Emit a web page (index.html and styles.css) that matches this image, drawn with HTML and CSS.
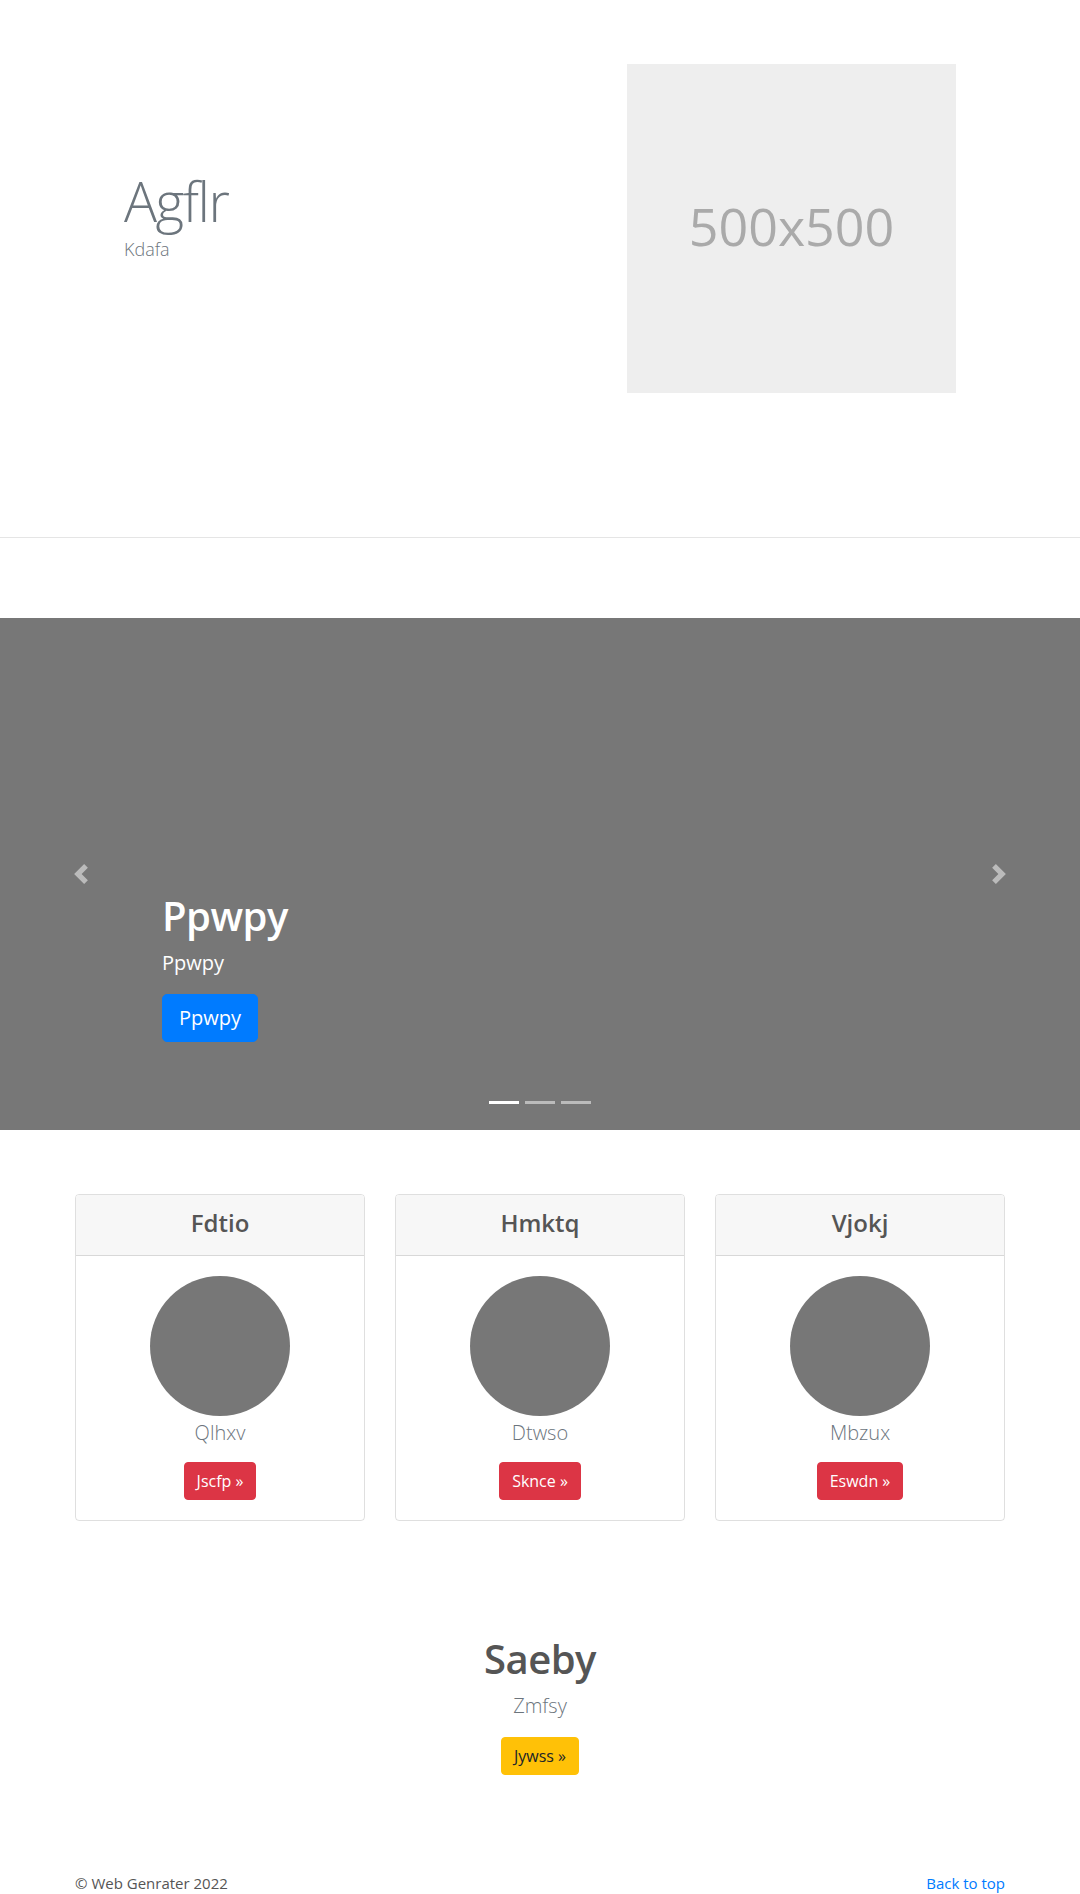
FILE: index.html
```html
<!DOCTYPE html>
<html lang="en">
<head>
<meta charset="utf-8">
<title>Agflr</title>
<link rel="stylesheet" href="styles.css">
</head>
<body>
<section class="hero">
  <div class="container hero-inner">
    <div class="hero-text">
      <h1 class="hero-title">Agflr</h1>
      <p class="hero-sub">Kdafa</p>
    </div>
    <div class="placeholder"><span>500x500</span></div>
  </div>
</section>
<hr class="divider">
<div class="carousel">
  <a class="ctrl prev" href="#"><svg width="20" height="20" viewBox="0 0 8 8"><path fill="#fff" d="M5.25 0l-4 4 4 4 1.5-1.5-2.5-2.5 2.5-2.5-1.5-1.5z"/></svg></a>
  <a class="ctrl next" href="#"><svg width="20" height="20" viewBox="0 0 8 8"><path fill="#fff" d="M2.75 0l-1.5 1.5 2.5 2.5-2.5 2.5 1.5 1.5 4-4-4-4z"/></svg></a>
  <div class="caption">
    <h1 class="caption-title">Ppwpy</h1>
    <p class="caption-text">Ppwpy</p>
    <a class="btn btn-lg btn-primary" href="#">Ppwpy</a>
  </div>
  <ol class="indicators"><li class="active"></li><li></li><li></li></ol>
</div>
<section class="container cards">
  <div class="card">
    <div class="card-header"><h4 class="card-title">Fdtio</h4></div>
    <div class="card-body">
      <div class="circle"></div>
      <p class="lead">Qlhxv</p>
      <a class="btn btn-danger" href="#">Jscfp »</a>
    </div>
  </div>
  <div class="card">
    <div class="card-header"><h4 class="card-title">Hmktq</h4></div>
    <div class="card-body">
      <div class="circle"></div>
      <p class="lead">Dtwso</p>
      <a class="btn btn-danger" href="#">Sknce »</a>
    </div>
  </div>
  <div class="card">
    <div class="card-header"><h4 class="card-title">Vjokj</h4></div>
    <div class="card-body">
      <div class="circle"></div>
      <p class="lead">Mbzux</p>
      <a class="btn btn-danger" href="#">Eswdn »</a>
    </div>
  </div>
</section>
<section class="feature">
  <h2 class="feature-title">Saeby</h2>
  <p class="lead">Zmfsy</p>
  <a class="btn btn-warning" href="#">Jywss »</a>
</section>
<footer class="container footer">
  <p class="copy">© Web Genrater 2022</p>
  <a class="top-link" href="#">Back to top</a>
</footer>
</body>
</html>
```
FILE: styles.css
```css
* { box-sizing: border-box; }
html, body { margin: 0; padding: 0; }
body {
  font-family: "Open Sans", "Noto Sans", Arial, sans-serif;
  font-size: 16px;
  line-height: 1.5;
  color: #555;
  background: #fff;
  overflow-x: hidden;
}
.container {
  max-width: 960px;
  margin: 0 auto;
  padding: 0 15px;
}
.hero { padding: 64px 0 144px; }
.hero-inner {
  display: flex;
  justify-content: space-between;
  padding: 0 64px;
}
.hero-text { padding-top: 104px; }
.hero-title {
  margin: 0 0 3px;
  font-size: 55px;
  line-height: 1.2;
  font-weight: 300;
  letter-spacing: -1.5px;
  color: #6c757d;
}
.hero-sub {
  margin: 0;
  font-size: 18px;
  line-height: 24px;
  font-weight: 300;
  color: #6c757d;
}
.placeholder {
  width: 329px;
  height: 329px;
  background: #eee;
  display: flex;
  align-items: center;
  justify-content: center;
  padding-bottom: 6px;
  color: #aaa;
  font-size: 52px;
}
.divider {
  margin: 0;
  height: 0;
  border: 0;
  border-top: 1px solid #e5e5e5;
}
.carousel {
  position: relative;
  margin-top: 80px;
  height: 512px;
  background: #777;
}
.ctrl {
  position: absolute;
  top: 0;
  bottom: 0;
  width: 15%;
  display: flex;
  align-items: center;
  justify-content: center;
  opacity: .5;
}
.ctrl.prev { left: 0; }
.ctrl.next { right: 0; }
.ctrl svg { display: block; }
.caption {
  position: absolute;
  left: 15%;
  right: 15%;
  bottom: 88px;
  color: #fff;
}
.caption-title {
  margin: 0 0 8px;
  font-size: 40px;
  line-height: 1.2;
  font-weight: 600;
  letter-spacing: -0.5px;
}
.caption-text {
  margin: 0 0 16px;
  font-size: 20px;
  line-height: 1.5;
}
.btn {
  display: inline-block;
  padding: 6px 12px;
  font-size: 16px;
  line-height: 24px;
  border: 1px solid transparent;
  border-radius: 4px;
  text-decoration: none;
  font-weight: 400;
}
.btn-lg {
  padding: 8px 16px;
  font-size: 20px;
  line-height: 30px;
  border-radius: 5px;
}
.btn-primary { background: #007bff; border-color: #007bff; color: #fff; }
.btn-danger { background: #dc3545; border-color: #dc3545; color: #fff; }
.btn-warning { background: #ffc107; border-color: #ffc107; color: #212529; }
.indicators {
  position: absolute;
  left: 0;
  right: 0;
  bottom: 26px;
  margin: 0;
  padding: 0;
  list-style: none;
  display: flex;
  justify-content: center;
  gap: 6px;
}
.indicators li {
  width: 30px;
  height: 3px;
  background: rgba(255, 255, 255, .5);
}
.indicators li.active { background: #fff; }
.cards {
  margin-top: 64px;
  display: grid;
  grid-template-columns: repeat(3, 1fr);
  gap: 30px;
}
.card {
  border: 1px solid rgba(0, 0, 0, .125);
  border-radius: 4px;
  overflow: hidden;
  text-align: center;
}
.card-header {
  padding: 10px 20px 14px;
  background: #f7f7f7;
  border-bottom: 1px solid rgba(0, 0, 0, .125);
}
.card-title {
  margin: 0;
  font-size: 24px;
  line-height: 36px;
  font-weight: 600;
  color: #555;
}
.card-body { padding: 20px; }
.circle {
  width: 140px;
  height: 140px;
  margin: 0 auto;
  border-radius: 50%;
  background: #777;
}
.card-body .lead { padding-top: 2px; margin-bottom: 14px; }
.lead {
  margin: 0 0 16px;
  font-size: 20px;
  line-height: 30px;
  font-weight: 300;
  color: #6c757d;
}
.feature {
  margin-top: 114px;
  text-align: center;
}
.feature-title {
  margin: 0 0 8px;
  font-size: 40px;
  line-height: 48px;
  font-weight: 600;
  letter-spacing: -0.5px;
  color: #555;
}
.footer {
  margin-top: 97px;
  display: flex;
  justify-content: space-between;
  align-items: flex-start;
  font-size: 15px;
}
.copy { margin: 0; color: #555; }
.top-link { color: #007bff; text-decoration: none; }
```
